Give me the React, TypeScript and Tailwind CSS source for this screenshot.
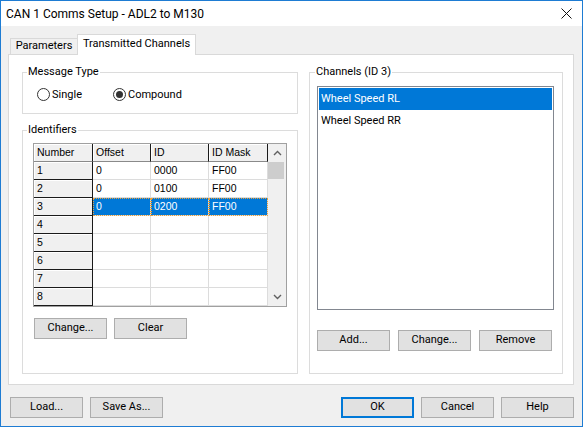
import React from "react";

const rows = [
  { n: "1", offset: "0", id: "0000", mask: "FF00" },
  { n: "2", offset: "0", id: "0100", mask: "FF00" },
  { n: "3", offset: "0", id: "0200", mask: "FF00", selected: true },
  { n: "4" },
  { n: "5" },
  { n: "6" },
  { n: "7" },
  { n: "8" },
];

function Btn({ children, def = false }: { children: React.ReactNode; def?: boolean }) {
  return (
    <div
      className={
        def
          ? "w-[73px] h-[21px] flex items-center justify-center bg-[#e1e1e1] border-2 border-[#0078d7]"
          : "w-[73px] h-[21px] flex items-center justify-center bg-[#e1e1e1] border border-[#adadad]"
      }
    >
      {children}
    </div>
  );
}

function Chevron({ up }: { up: boolean }) {
  return (
    <svg width="9" height="6" viewBox="0 0 9 6">
      <path
        d={up ? "M1 5 L4.5 1.5 L8 5" : "M1 1 L4.5 4.5 L8 1"}
        fill="none"
        stroke="#606060"
        strokeWidth="1.4"
      />
    </svg>
  );
}

export default function App() {
  return (
    <div className="w-[583px] h-[427px] border border-[#1e7cd3] bg-[#f0f0f0] flex flex-col overflow-hidden font-['Roboto',sans-serif] text-[11px] text-black">
      {/* Title bar */}
      <div className="h-[25px] bg-white flex items-center justify-between pl-[5px] pr-[10px] shrink-0">
        <span className="text-[12px]">CAN 1 Comms Setup - ADL2 to M130</span>
        <svg width="11" height="11" viewBox="0 0 11 11">
          <path d="M0.5 0.5 L10.5 10.5 M10.5 0.5 L0.5 10.5" stroke="#111" strokeWidth="1" />
        </svg>
      </div>

      {/* Body */}
      <div className="flex-1 flex flex-col px-[7px]">
        {/* Tabs */}
        <div className="h-[28px] flex items-end pl-[2px] shrink-0">
          <div className="w-[67px] h-[16px] bg-[#f0f0f0] border border-[#d9d9d9] border-b-0 border-r-0 flex items-center justify-center">
            Parameters
          </div>
          <div className="relative z-10 -mb-px w-[119px] h-[21px] bg-white border border-[#d9d9d9] border-b-0 flex items-center justify-center pb-[1px]">
            Transmitted Channels
          </div>
        </div>

        {/* Panel */}
        <div className="w-[566px] h-[331px] border border-[#d9d9d9] bg-white flex pt-[17px] pl-[13px] gap-[11px] shrink-0">
          {/* Left column */}
          <div className="w-[276px] flex flex-col">
            {/* Message Type */}
            <div className="relative h-[42px] border border-[#dcdcdc] flex items-start pl-[14px] pt-[15px]">
              <span className="absolute left-[4px] top-[-8px] px-[1px] bg-white leading-[14px]">Message Type</span>
              <div className="w-[76px] flex items-center gap-[2px]">
                <div className="w-[13px] h-[13px] rounded-full border border-[#333] bg-white" />
                <span className="leading-[13px]">Single</span>
              </div>
              <div className="flex items-center gap-[2px]">
                <div className="w-[13px] h-[13px] rounded-full border border-[#333] bg-white flex items-center justify-center">
                  <div className="w-[7px] h-[7px] rounded-full bg-[#333]" />
                </div>
                <span className="leading-[13px]">Compound</span>
              </div>
            </div>

            {/* Identifiers */}
            <div className="relative mt-[16px] h-[244px] border border-[#dcdcdc] pl-[10px] pt-[12px] flex flex-col">
              <span className="absolute left-[4px] top-[-8px] px-[1px] bg-white leading-[14px]">Identifiers</span>

              {/* Grid */}
              <div className="w-[254px] h-[164px] border border-[#a0a0a0] flex font-['Liberation_Sans',sans-serif] text-[10.5px]">
                <div className="flex flex-col">
                  {/* header */}
                  <div className="flex h-[18px]">
                    {[
                      ["Number", "w-[59px]"],
                      ["Offset", "w-[58px]"],
                      ["ID", "w-[58px]"],
                      ["ID Mask", "w-[59px]"],
                    ].map(([t, w]) => (
                      <div
                        key={t}
                        className={`${w} h-[18px] bg-[#f0f0f0] border-r border-b border-r-[#1a1a1a] border-b-[#8a8a8a] shadow-[inset_1px_1px_0_#ffffff] pl-[3px] leading-[17px]`}
                      >
                        {t}
                      </div>
                    ))}
                  </div>
                  {rows.map((r) => (
                    <div key={r.n} className="flex h-[18px]">
                      <div className="w-[59px] h-[18px] bg-[#f0f0f0] border-r border-b border-r-[#1a1a1a] border-b-[#1a1a1a] shadow-[inset_1px_1px_0_#ffffff] pl-[3px] leading-[17px]">
                        {r.n}
                      </div>
                      {[
                        [r.offset, "w-[58px]"],
                        [r.id, "w-[58px]"],
                        [r.mask, "w-[59px]"],
                      ].map(([t, w], i) =>
                        r.selected ? (
                          <div
                            key={i}
                            className={`${w} h-[18px] bg-[#0078d7] text-white border-r border-b border-[#dcdcdc] outline-1 outline-dotted outline-[#e9a13c] -outline-offset-1 pl-[3px] leading-[17px]`}
                          >
                            {t}
                          </div>
                        ) : (
                          <div
                            key={i}
                            className={`${w} h-[18px] bg-white border-r border-b border-[#dcdcdc] pl-[3px] leading-[17px]`}
                          >
                            {t}
                          </div>
                        )
                      )}
                    </div>
                  ))}
                </div>
                {/* scrollbar */}
                <div className="w-[18px] flex flex-col bg-[#f0f0f0]">
                  <div className="h-[18px] flex items-center justify-center">
                    <Chevron up />
                  </div>
                  <div className="h-[17px] w-[16px] bg-[#cdcdcd]" />
                  <div className="flex-1" />
                  <div className="h-[18px] flex items-center justify-center">
                    <Chevron up={false} />
                  </div>
                </div>
              </div>

              <div className="mt-[11px] pl-[1px] flex gap-[7px]">
                <Btn>Change...</Btn>
                <Btn>Clear</Btn>
              </div>
            </div>
          </div>

          {/* Right column */}
          <div className="relative w-[254px] h-[302px] border border-[#dcdcdc] pl-[7px] pt-[13px] flex flex-col">
            <span className="absolute left-[5px] top-[-8px] px-[1px] bg-white leading-[14px]">Channels (ID 3)</span>
            <div className="w-[237px] h-[224px] border border-[#828790] bg-white p-[1px] flex flex-col">
              <div className="h-[22px] bg-[#0078d7] text-white pl-[2px] flex items-center">Wheel Speed RL</div>
              <div className="h-[22px] pl-[2px] flex items-center">Wheel Speed RR</div>
            </div>
            <div className="mt-[20px] flex gap-[8px]">
              <Btn>Add...</Btn>
              <Btn>Change...</Btn>
              <Btn>Remove</Btn>
            </div>
          </div>
        </div>

        {/* Bottom buttons */}
        <div className="w-[566px] mt-[12px] flex justify-between pl-[2px]">
          <div className="flex gap-[7px]">
            <Btn>Load...</Btn>
            <Btn>Save As...</Btn>
          </div>
          <div className="flex gap-[7px]">
            <Btn def>OK</Btn>
            <Btn>Cancel</Btn>
            <Btn>Help</Btn>
          </div>
        </div>
      </div>
    </div>
  );
}
